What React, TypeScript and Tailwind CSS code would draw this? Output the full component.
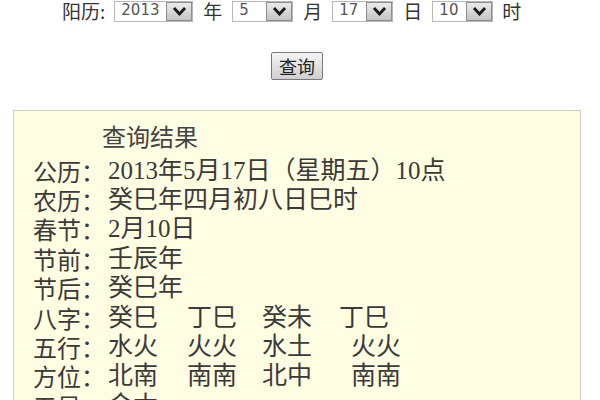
import React from 'react';

const Arrow: React.FC = () => (
  <div className="flex h-full w-[26px] items-center justify-center border border-[#8c8c8c] bg-gradient-to-b from-[#ececec] to-[#c4c4c4]">
    <svg width="15" height="10" viewBox="0 0 15 10">
      <path d="M2 2 L7.5 8 L13 2" fill="none" stroke="#1a1a1a" strokeWidth="2.8" />
    </svg>
  </div>
);

const FakeSelect: React.FC<{ value: string; width: string }> = ({ value, width }) => (
  <div className={`flex h-[21px] ${width} border border-[#b8b8b8] bg-white`}>
    <div className="flex-1 pl-[6px] text-[15px] leading-[16px] text-[#555]" style={{ fontFamily: '"DejaVu Sans", sans-serif' }}>
      {value}
    </div>
    <Arrow />
  </div>
);

const sans = { fontFamily: '"Noto Sans CJK SC", sans-serif' };
const serif = { fontFamily: '"Liberation Serif", "Noto Sans CJK SC", serif' };

const rows: { label: string; cols: { text: string; w?: string }[] }[] = [
  { label: '公历：', cols: [{ text: '2013年5月17日（星期五）10点' }] },
  { label: '农历：', cols: [{ text: '癸巳年四月初八日巳时' }] },
  { label: '春节：', cols: [{ text: '2月10日' }] },
  { label: '节前：', cols: [{ text: '壬辰年' }] },
  { label: '节后：', cols: [{ text: '癸巳年' }] },
  {
    label: '八字：',
    cols: [
      { text: '癸巳', w: 'w-[79px]' },
      { text: '丁巳', w: 'w-[75px]' },
      { text: '癸未', w: 'w-[77px]' },
      { text: '丁巳' },
    ],
  },
  {
    label: '五行：',
    cols: [
      { text: '水火', w: 'w-[79px]' },
      { text: '火火', w: 'w-[75px]' },
      { text: '水土', w: 'w-[89px]' },
      { text: '火火' },
    ],
  },
  {
    label: '方位：',
    cols: [
      { text: '北南', w: 'w-[79px]' },
      { text: '南南', w: 'w-[75px]' },
      { text: '北中', w: 'w-[89px]' },
      { text: '南南' },
    ],
  },
  { label: '五星：', cols: [{ text: '金木' }] },
];

const App: React.FC = () => {
  return (
    <div className="h-[400px] w-[600px] overflow-hidden bg-white">
      {/* date pickers */}
      <div className="flex h-[22px] items-center text-[19px] leading-[22px] text-[#333]" style={sans}>
        <span className="ml-[62px] mr-[9px]">阳历:</span>
        <FakeSelect value="2013" width="w-[79px]" />
        <span className="mx-[10px]">年</span>
        <FakeSelect value="5" width="w-[61px]" />
        <span className="mx-[10px]">月</span>
        <FakeSelect value="17" width="w-[61px]" />
        <span className="mx-[10px]">日</span>
        <FakeSelect value="10" width="w-[61px]" />
        <span className="ml-[9px]">时</span>
      </div>

      {/* button */}
      <div className="mt-[30px] flex">
        <button
          className="ml-[271px] h-[28px] w-[52px] rounded-[2px] border border-[#7a7a7a] bg-gradient-to-b from-[#f4f4f4] to-[#d0d0d0] text-[18px] leading-[24px] text-[#222]"
          style={sans}
        >
          查询
        </button>
      </div>

      {/* result box */}
      <div className="ml-[13px] mt-[30px] w-[568px] border-[1.5px] border-[#cfcfc4] bg-[#fffde2] pl-[19px] pt-[10px]">
        <div className="pl-[69px] text-[24px] leading-[29px] text-[#444]" style={sans}>
          查询结果
        </div>
        <div className="mt-[6px]">
          {rows.map((r, i) => (
            <div key={i} className="flex h-[29.4px] items-center text-[24px] leading-[28px] text-[#3a3a3a]">
              <span className="w-[75px] shrink-0" style={sans}>
                {r.label}
              </span>
              {r.cols.map((c, j) => (
                <span key={j} className={`${c.w ?? ''} shrink-0 whitespace-nowrap text-[25px]`} style={serif}>
                  {c.text}
                </span>
              ))}
            </div>
          ))}
        </div>
      </div>
    </div>
  );
};

export default App;
